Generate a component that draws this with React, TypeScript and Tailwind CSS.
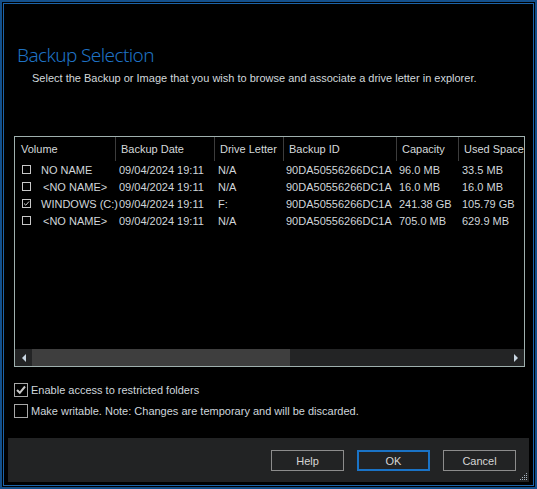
import React from "react";

interface Row {
  name: string;
  date: string;
  drive: string;
  id: string;
  capacity: string;
  used: string;
  checked: boolean;
}

const rows: Row[] = [
  { name: "NO NAME", date: "09/04/2024 19:11", drive: "N/A", id: "90DA50556266DC1A", capacity: "96.0 MB", used: "33.5 MB", checked: false },
  { name: "<NO NAME>", date: "09/04/2024 19:11", drive: "N/A", id: "90DA50556266DC1A", capacity: "16.0 MB", used: "16.0 MB", checked: false },
  { name: "WINDOWS (C:)", date: "09/04/2024 19:11", drive: "F:", id: "90DA50556266DC1A", capacity: "241.38 GB", used: "105.79 GB", checked: true },
  { name: "<NO NAME>", date: "09/04/2024 19:11", drive: "N/A", id: "90DA50556266DC1A", capacity: "705.0 MB", used: "629.9 MB", checked: false },
];

function SmallCheck({ checked }: { checked: boolean }) {
  return (
    <span className="w-[9px] h-[9px] border border-[#c8c8c8] flex items-center justify-center shrink-0">
      {checked && (
        <svg width="7" height="7" viewBox="0 0 7 7">
          <path d="M1 3.5 L2.8 5.2 L6 1.5" stroke="#d0d0d0" strokeWidth="1" fill="none" />
        </svg>
      )}
    </span>
  );
}

function BigCheck({ checked, label }: { checked: boolean; label: string }) {
  return (
    <div className="flex items-center h-[14px]">
      <span className="w-[14px] h-[14px] border border-[#a8a8a8] flex items-center justify-center shrink-0">
        {checked && (
          <svg width="12" height="12" viewBox="0 0 12 12">
            <path d="M2 6 L4.8 8.8 L10 2.5" stroke="#c8c8c8" strokeWidth="2" fill="none" />
          </svg>
        )}
      </span>
      <span className="ml-[3px] text-[#cfd6dc]">{label}</span>
    </div>
  );
}

function Button({ label, primary }: { label: string; primary?: boolean }) {
  return (
    <button
      className={
        primary
          ? "w-[73px] h-[21px] border-2 border-[#1a73c6] text-[#d6d6d6] flex items-center justify-center"
          : "w-[73px] h-[21px] border border-[#8c8c8c] text-[#d6d6d6] flex items-center justify-center"
      }
    >
      {label}
    </button>
  );
}

export default function App() {
  return (
    <div
      className="w-[537px] h-[489px] bg-black border-2 border-[#134f8a] p-px text-[11px] leading-[14px]"
      style={{ fontFamily: '"Liberation Sans", Arial, sans-serif' }}
    >
      <div className="w-full h-full border border-[#1c63a8] flex flex-col">
        {/* heading */}
        <div className="pl-[13px] pt-[39px]">
          <h1
            className="text-[#1f72c4] text-[19px] leading-[24px] font-light tracking-[-0.6px]"
            style={{ fontFamily: '"Noto Sans", sans-serif' }}
          >
            Backup Selection
          </h1>
          <p className="pl-[15px] mt-[4px] text-[#d2d8dc]">
            Select the Backup or Image that you wish to browse and associate a drive letter in explorer.
          </p>
        </div>

        {/* list */}
        <div className="ml-[10px] mt-[51px] w-[511px] h-[231px] border border-[#9fb0ae] flex flex-col">
          <div className="flex h-[24px] text-[#d4d8da] overflow-hidden">
            <div className="w-[101px] pl-[6px] flex items-center border-r border-[#3c3c3c] shrink-0">Volume</div>
            <div className="w-[99px] pl-[5px] flex items-center border-r border-[#3c3c3c] shrink-0">Backup Date</div>
            <div className="w-[69px] pl-[5px] flex items-center border-r border-[#3c3c3c] shrink-0">Drive Letter</div>
            <div className="w-[113px] pl-[5px] flex items-center border-r border-[#3c3c3c] shrink-0">Backup ID</div>
            <div className="w-[62px] pl-[5px] flex items-center border-r border-[#3c3c3c] shrink-0">Capacity</div>
            <div className="pl-[5px] flex items-center whitespace-nowrap">Used Space</div>
          </div>
          <div className="flex-1 text-[#d0d6da]">
            {rows.map((r, i) => (
              <div key={i} className="flex h-[17px] items-center whitespace-nowrap overflow-hidden">
                <div className="w-[101px] pl-[7px] flex items-center shrink-0">
                  <SmallCheck checked={r.checked} />
                  <span className={r.name.startsWith("<") ? "ml-[12px]" : "ml-[10px]"}>{r.name}</span>
                </div>
                <div className="w-[99px] pl-[3px] shrink-0">{r.date}</div>
                <div className="w-[69px] pl-[3px] shrink-0">{r.drive}</div>
                <div className="w-[113px] pl-[2px] shrink-0">{r.id}</div>
                <div className="w-[62px] pl-[2px] shrink-0">{r.capacity}</div>
                <div className="pl-[3px]">{r.used}</div>
              </div>
            ))}
          </div>
          {/* horizontal scrollbar */}
          <div className="h-[17px] bg-[#232425] flex items-center">
            <div className="w-[17px] h-full flex items-center justify-center">
              <svg width="6" height="8" viewBox="0 0 6 8">
                <polygon points="5,0 5,8 1,4" fill="#c9d6e2" />
              </svg>
            </div>
            <div className="w-[258px] h-full bg-[#3e3e3e]" />
            <div className="flex-1" />
            <div className="w-[17px] h-full flex items-center justify-center">
              <svg width="6" height="8" viewBox="0 0 6 8">
                <polygon points="1,0 1,8 5,4" fill="#c9d6e2" />
              </svg>
            </div>
          </div>
        </div>

        {/* options */}
        <div className="ml-[10px] mt-[16px] flex flex-col gap-[7px]">
          <BigCheck checked label="Enable access to restricted folders" />
          <BigCheck checked={false} label="Make writable. Note: Changes are temporary and will be discarded." />
        </div>

        {/* footer */}
        <div className="mt-auto mx-[4px] mb-[3px] h-[44px] bg-[#222324] flex items-center justify-end gap-[13px] pr-[13px] pt-[1px] relative">
          <Button label="Help" />
          <Button label="OK" primary />
          <Button label="Cancel" />
          <svg className="absolute right-[1px] bottom-[1px]" width="9" height="9" viewBox="0 0 9 9">
            <g fill="#a8b4bf">
              <rect x="7" y="1" width="1" height="1" />
              <rect x="5" y="3" width="1" height="1" />
              <rect x="7" y="3" width="1" height="1" />
              <rect x="3" y="5" width="1" height="1" />
              <rect x="5" y="5" width="1" height="1" />
              <rect x="7" y="5" width="1" height="1" />
              <rect x="1" y="7" width="1" height="1" />
              <rect x="3" y="7" width="1" height="1" />
              <rect x="5" y="7" width="1" height="1" />
              <rect x="7" y="7" width="1" height="1" />
            </g>
          </svg>
        </div>
      </div>
    </div>
  );
}
